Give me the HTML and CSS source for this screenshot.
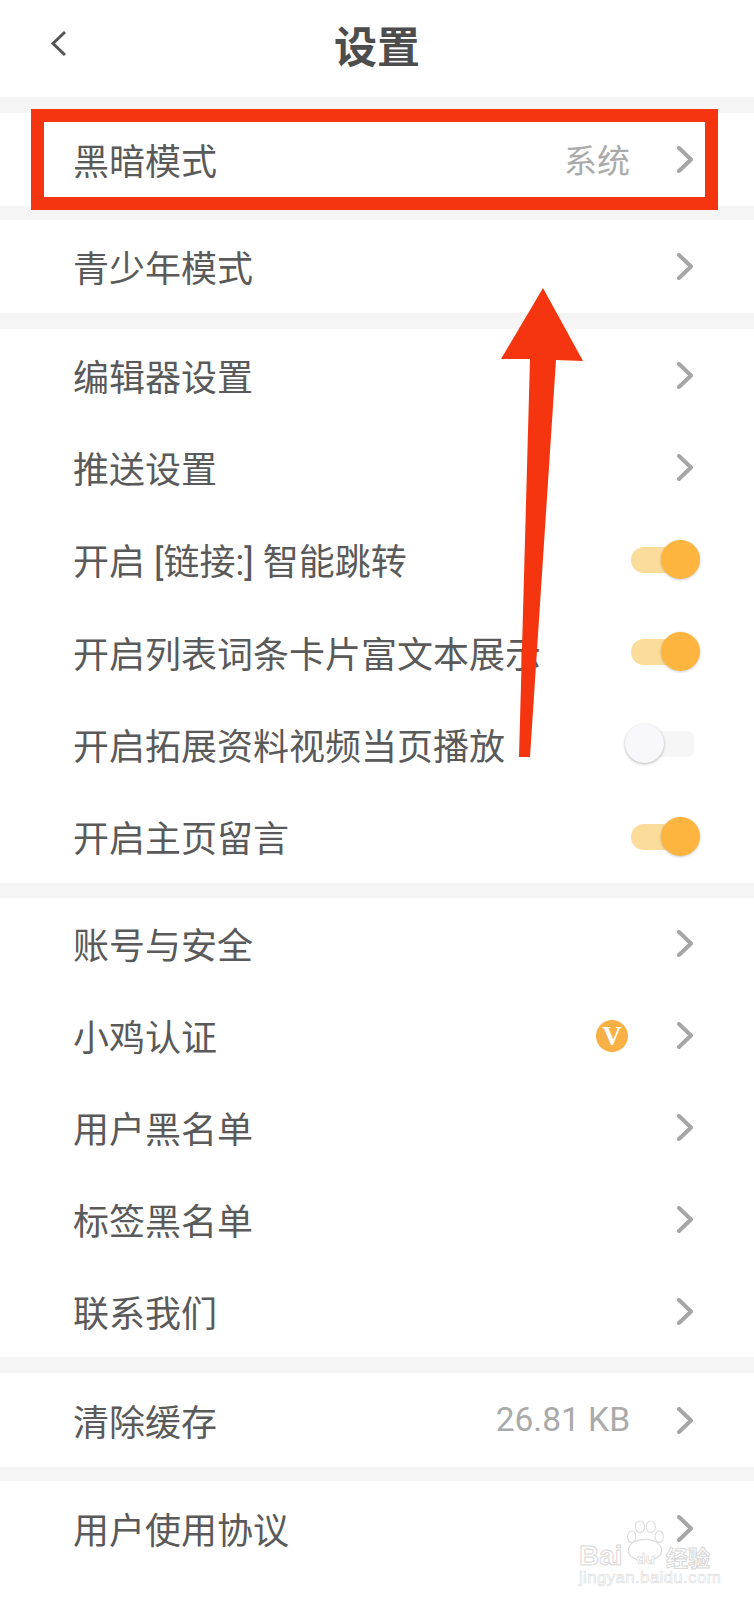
FILE: index.html
```html
<!DOCTYPE html>
<html lang="zh-CN">
<head>
  <meta charset="UTF-8" />
  <title>设置</title>
  <link rel="stylesheet" href="styles.css">
</head>
<body>
  <div id="page">
    <header class="topbar">
      <svg class="back" width="17" height="27" viewBox="0 0 17 27"><path d="M15 2 L3 13.5 L15 25" fill="none" stroke="#555" stroke-width="3"/></svg>
      <h1>设置</h1>
    </header>

    <section class="group first">
      <div class="row"><span class="label">黑暗模式</span><span class="value">系统</span><svg class="chev" viewBox="0 0 16 27"><path d="M2 2 L14 13.5 L2 25" /></svg></div>
    </section>

    <section class="group second">
      <div class="row"><span class="label">青少年模式</span><svg class="chev" viewBox="0 0 16 27"><path d="M2 2 L14 13.5 L2 25" /></svg></div>
    </section>

    <section class="group third">
      <div class="row"><span class="label">编辑器设置</span><svg class="chev" viewBox="0 0 16 27"><path d="M2 2 L14 13.5 L2 25" /></svg></div>
      <div class="row"><span class="label">推送设置</span><svg class="chev" viewBox="0 0 16 27"><path d="M2 2 L14 13.5 L2 25" /></svg></div>
      <div class="row"><span class="label">开启 [链接:] 智能跳转</span><div class="toggle on"><i></i><b></b></div></div>
      <div class="row"><span class="label">开启列表词条卡片富文本展示</span><div class="toggle on"><i></i><b></b></div></div>
      <div class="row"><span class="label">开启拓展资料视频当页播放</span><div class="toggle"><i></i><b></b></div></div>
      <div class="row"><span class="label">开启主页留言</span><div class="toggle on"><i></i><b></b></div></div>
    </section>

    <section class="group fourth">
      <div class="row"><span class="label">账号与安全</span><svg class="chev" viewBox="0 0 16 27"><path d="M2 2 L14 13.5 L2 25" /></svg></div>
      <div class="row"><span class="label">小鸡认证</span><span class="badge">V</span><svg class="chev" viewBox="0 0 16 27"><path d="M2 2 L14 13.5 L2 25" /></svg></div>
      <div class="row"><span class="label">用户黑名单</span><svg class="chev" viewBox="0 0 16 27"><path d="M2 2 L14 13.5 L2 25" /></svg></div>
      <div class="row"><span class="label">标签黑名单</span><svg class="chev" viewBox="0 0 16 27"><path d="M2 2 L14 13.5 L2 25" /></svg></div>
      <div class="row"><span class="label">联系我们</span><svg class="chev" viewBox="0 0 16 27"><path d="M2 2 L14 13.5 L2 25" /></svg></div>
    </section>

    <section class="group fifth">
      <div class="row"><span class="label">清除缓存</span><span class="value size">26.81 KB</span><svg class="chev" viewBox="0 0 16 27"><path d="M2 2 L14 13.5 L2 25" /></svg></div>
    </section>

    <section class="group last">
      <div class="row"><span class="label">用户使用协议</span><svg class="chev" viewBox="0 0 16 27"><path d="M2 2 L14 13.5 L2 25" /></svg></div>
    </section>

    <!-- annotations on top of the screenshot -->
    <div class="redbox"></div>
    <svg class="arrow" width="754" height="800" viewBox="0 0 754 800">
      <polygon points="543,288 583,361 556,360 530,757 519,757 530,359 501,359" fill="#f4350f"/>
    </svg>

    <div class="watermark">
      <svg class="paw" width="40" height="42" viewBox="0 0 48 50">
        <g fill="#fff" stroke="#ddd" stroke-width="1.4">
          <ellipse cx="8" cy="20" rx="5" ry="7"/>
          <ellipse cx="18" cy="8" rx="5.5" ry="7"/>
          <ellipse cx="31" cy="8" rx="5.5" ry="7"/>
          <ellipse cx="41" cy="20" rx="5" ry="7"/>
          <ellipse cx="24" cy="36" rx="20" ry="13"/>
        </g>
      </svg>
      <div class="wm-line"><span class="wm-bai">Bai</span><span class="wm-du">du</span><span class="wm-cn">经验</span></div>
      <div class="wm-url">jingyan.baidu.com</div>
    </div>
  </div>
</body>
</html>
```

FILE: styles.css
```css
body {
  margin: 0;
  background: #f5f5f5;
  font-family: "Noto Sans CJK SC", "Noto Sans", sans-serif;
  color: #5a5a5a;
}
#page {
  position: relative;
  width: 754px;
  height: 1600px;
  overflow: hidden;
}
.topbar {
  height: 97px;
  background: #fff;
  display: flex;
  align-items: center;
  justify-content: center;
  position: relative;
}
.topbar h1 {
  margin: -8px 0 0;
  font-size: 43px;
  font-weight: 700;
  color: #4d4d4d;
  line-height: 1;
}
.back {
  position: absolute;
  left: 50px;
  top: 30px;
}
.group {
  background: #fff;
  display: flex;
  flex-direction: column;
}
.first { margin-top: 16px; height: 93px; }
.second { margin-top: 14px; height: 93px; }
.third { margin-top: 16px; height: 554px; }
.fourth { margin-top: 15px; height: 459px; }
.fifth { margin-top: 16px; height: 94px; }
.last { margin-top: 14px; height: 119px; }
.last .row { flex: none; height: 94px; }
.row {
  flex: 1;
  display: flex;
  align-items: center;
  padding: 0 61px 0 73px;
}
.label {
  flex: 1;
  padding-top: 7px;
  font-family: Roboto, "Noto Sans CJK SC", sans-serif;
  font-size: 36px;
  line-height: 1;
  white-space: nowrap;
}
.value {
  font-size: 33px;
  color: #aaa;
  margin-right: 47px;
  line-height: 1;
}
.size {
  font-family: Roboto, sans-serif;
  font-size: 33.5px;
}
.chev {
  width: 16px;
  height: 27px;
  flex: none;
}
.chev path {
  fill: none;
  stroke: #a6a6a6;
  stroke-width: 4;
  stroke-linecap: round;
  stroke-linejoin: round;
}
.badge {
  width: 32px;
  height: 32px;
  border-radius: 50%;
  background: #f9b044;
  color: #fff;
  font-family: "Liberation Serif", serif;
  font-weight: 700;
  font-size: 27px;
  line-height: 32px;
  text-align: center;
  margin-right: 49px;
}
.toggle {
  position: relative;
  width: 75px;
  height: 40px;
  margin-right: -7px;
  flex: none;
}
.toggle i {
  position: absolute;
  left: 6px;
  right: 6px;
  top: 7px;
  bottom: 7px;
  border-radius: 6px;
  background: #f6f6f6;
}
.toggle b {
  position: absolute;
  left: 0;
  top: 0;
  width: 39px;
  height: 39px;
  border-radius: 50%;
  background: #f8f8fa;
  box-shadow: 0 1px 3px rgba(0, 0, 0, .3);
}
.toggle.on i {
  border-radius: 13px;
  background: #fbdc9b;
}
.toggle.on b {
  left: 36px;
  background: #fdb53f;
  box-shadow: 0 1px 3px rgba(0, 0, 0, .2);
}
.redbox {
  position: absolute;
  left: 31px;
  top: 109px;
  width: 687px;
  height: 101px;
  border: 13px solid #f4350f;
  box-sizing: border-box;
}
.arrow {
  position: absolute;
  left: 0;
  top: 0;
}
.watermark {
  position: absolute;
  left: 579px;
  top: 1520px;
  width: 140px;
  height: 66px;
  color: #fff;
}
.paw {
  position: absolute;
  left: 46px;
  top: 0;
}
.wm-line {
  position: absolute;
  left: 0;
  top: 18px;
  display: flex;
  align-items: center;
  white-space: nowrap;
  -webkit-text-stroke: 1px #d8d8d8;
  font-family: "Liberation Sans", sans-serif;
  font-size: 28px;
  font-weight: 700;
  line-height: 30px;
}
.wm-du {
  font-size: 15px;
  margin: 6px 11px 0 14px;
  -webkit-text-stroke: .6px #d8d8d8;
}
.wm-cn {
  font-family: "Noto Sans CJK SC", sans-serif;
  font-size: 22px;
}
.wm-url {
  position: absolute;
  left: 0;
  top: 48px;
  font-family: "Liberation Sans", sans-serif;
  font-size: 17px;
  white-space: nowrap;
  -webkit-text-stroke: .6px #dcdcdc;
  letter-spacing: .3px;
}
```
